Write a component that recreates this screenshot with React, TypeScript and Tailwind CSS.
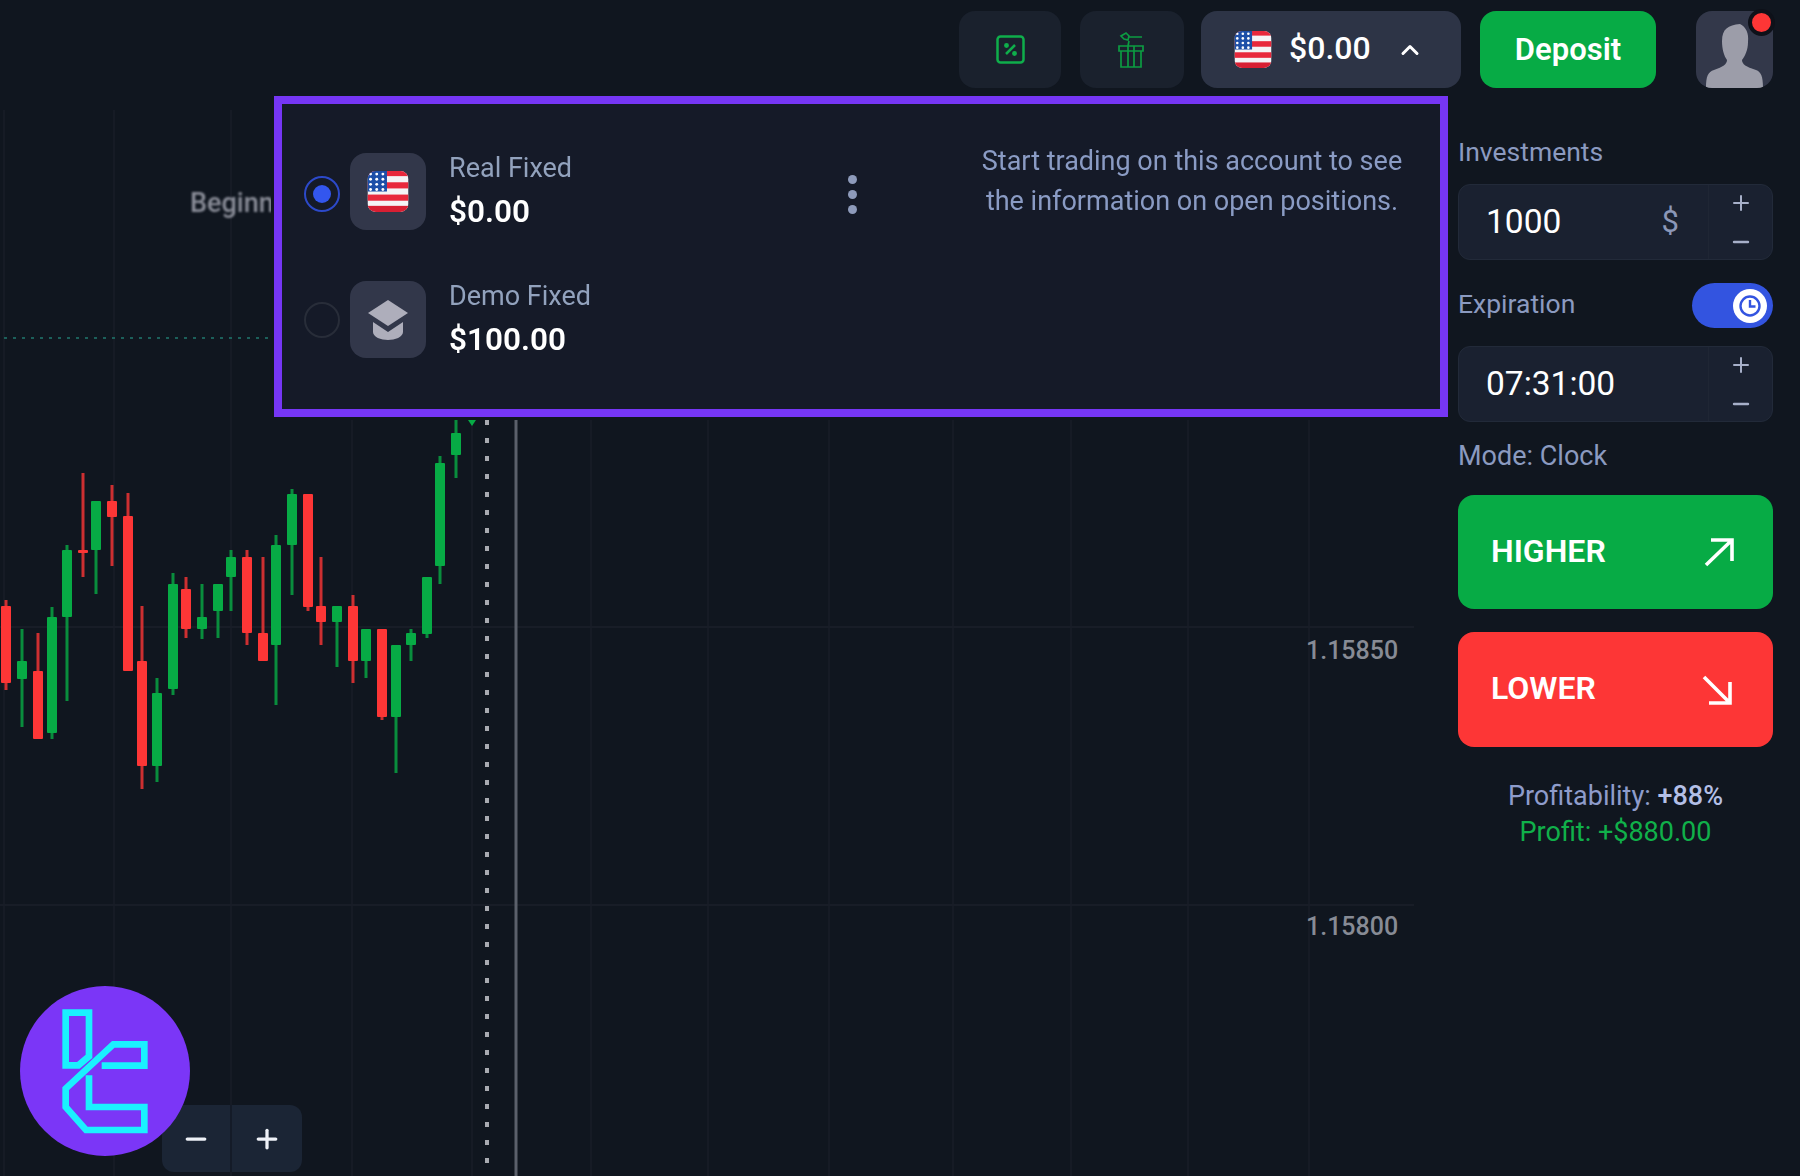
import { ChevronUp, Minus, Plus } from 'lucide-react'

type Candle = [number, number, number, number, number, 'r' | 'g']

// x, wick top, wick bottom, body top, body bottom
const candles: Candle[] = [
  [6, 600, 690, 606, 683, 'r'],
  [22, 629, 727, 661, 679, 'g'],
  [38, 633, 739, 671, 739, 'r'],
  [52, 607, 739, 617, 733, 'g'],
  [67, 545, 701, 550, 617, 'g'],
  [83, 473, 577, 550, 553, 'r'],
  [96, 501, 594, 501, 550, 'g'],
  [112, 485, 566, 501, 517, 'r'],
  [128, 493, 671, 516, 671, 'r'],
  [142, 606, 789, 661, 766, 'r'],
  [157, 678, 782, 693, 766, 'g'],
  [173, 573, 695, 584, 689, 'g'],
  [186, 577, 638, 589, 629, 'r'],
  [202, 584, 639, 617, 629, 'g'],
  [218, 584, 638, 584, 611, 'g'],
  [231, 550, 611, 557, 577, 'g'],
  [247, 550, 645, 557, 633, 'r'],
  [263, 557, 661, 633, 661, 'r'],
  [276, 535, 705, 545, 645, 'g'],
  [292, 489, 595, 494, 545, 'g'],
  [308, 494, 611, 494, 607, 'r'],
  [321, 557, 645, 606, 622, 'r'],
  [337, 606, 667, 606, 622, 'g'],
  [353, 595, 683, 606, 661, 'r'],
  [366, 629, 678, 629, 661, 'g'],
  [382, 629, 720, 629, 717, 'r'],
  [396, 645, 773, 645, 717, 'g'],
  [411, 629, 661, 633, 645, 'g'],
  [427, 577, 638, 577, 634, 'g'],
  [440, 456, 584, 463, 566, 'g'],
  [456, 420, 478, 433, 455, 'g'],
]

const gridX = [4, 114, 231, 352, 472, 591, 708, 829, 953, 1071, 1188, 1309]

function Flag({ className }: { className: string }) {
  return (
    <svg viewBox="0 0 40 40" className={className}>
      <defs>
        <clipPath id="flag-clip">
          <rect width="40" height="40" rx="8" />
        </clipPath>
      </defs>
      <g clipPath="url(#flag-clip)">
        <rect width="40" height="40" fill="#f4f4f6" />
        <rect y="0" width="40" height="5" fill="#e8283c" />
        <rect y="11" width="40" height="6" fill="#e8283c" />
        <rect y="23" width="40" height="6" fill="#e8283c" />
        <rect y="34" width="40" height="6" fill="#d81f33" />
        <rect width="19" height="20" fill="#1d4fa8" />
        {[3, 8, 13, 18].map(y =>
          [3, 9, 15].map(x => <circle key={`${x}-${y}`} cx={x} cy={y} r="1.4" fill="#fff" />)
        )}
      </g>
    </svg>
  )
}

function ChartArea() {
  return (
    <svg viewBox="0 96 1458 1080" className="block w-[1458px] h-[1080px]">
      {gridX.map(x => (
        <line key={x} x1={x} x2={x} y1="110" y2="1176" stroke="#161b25" strokeWidth="2" />
      ))}
      <line x1="0" x2="1414" y1="627" y2="627" stroke="#181d27" strokeWidth="2" />
      <line x1="0" x2="1414" y1="905" y2="905" stroke="#181d27" strokeWidth="2" />
      <line x1="4" x2="274" y1="338" y2="338" stroke="#1c5f5a" strokeWidth="2" strokeDasharray="3 6" />
      <line x1="487" x2="487" y1="420" y2="1176" stroke="#a9abb1" strokeWidth="4" strokeDasharray="5 13" />
      <line x1="516" x2="516" y1="420" y2="1176" stroke="#5b606b" strokeWidth="3" />
      <path d="M468 420 h8 l-4 6 z" fill="#07ab45" />
      <g className="blur-[0.5px]">
        {candles.map(([x, wt, wb, bt, bb, c]) => (
          <g key={x} fill={c === 'r' ? '#fd3636' : '#07ab45'}>
            <rect x={x - 1.5} y={wt} width="3" height={wb - wt} opacity="0.8" />
            <rect x={x - 5} y={bt} width="10" height={bb - bt} rx="1" />
          </g>
        ))}
      </g>
    </svg>
  )
}

function Logo() {
  return (
    <svg viewBox="60 77 510 510" className="absolute left-[20px] top-[986px] w-[170px] h-[170px]">
      <circle cx="315" cy="332" r="255" fill="#7b36f7" />
      <g fill="none" stroke="#1af1ff" strokeWidth="20">
        <path d="M197 157 H267 V288 L235 315 H197 Z" />
        <path d="M267 345 V440 H433 V509 H258 L197 440 V385 L340 252 H433 V316 H305" />
      </g>
    </svg>
  )
}

function Stepper({ value, unit }: { value: string; unit?: string }) {
  return (
    <div className="flex h-[76px] rounded-[12px] bg-[#1a2130] border border-[#222a39] text-white">
      <div className="flex-1 flex items-center justify-between pl-[27px] pr-[29px] text-[33.5px]">
        <span>{value}</span>
        {unit && <span className="text-[#8b97b8] text-[31px]">{unit}</span>}
      </div>
      <div className="w-[64px] flex flex-col items-center justify-center gap-[15px] text-[#a7b0c9] border-l border-[#1f2634]">
        <Plus className="w-[24px] h-[24px]" strokeWidth={2} />
        <Minus className="w-[24px] h-[24px]" strokeWidth={2.4} />
      </div>
    </div>
  )
}

function Account({
  icon,
  name,
  balance,
  active,
}: {
  icon: React.ReactNode
  name: string
  balance: string
  active?: boolean
}) {
  return (
    <div className="flex items-center h-[77px]">
      <div
        className={`w-[36px] h-[36px] rounded-full border-2 flex items-center justify-center ${
          active ? 'mt-[4px] border-[#2c49c9]' : 'border-[#282d39]'
        }`}
      >
        {active && <div className="w-[18px] h-[18px] rounded-full bg-[#3356ee]" />}
      </div>
      <div className="w-[76px] h-[77px] ml-[10px] rounded-[16px] bg-[#32374a] flex items-center justify-center">
        {icon}
      </div>
      <div className="ml-[23px]">
        <p className="text-[27px] leading-[38px] -mt-[2px] text-[#92a2bd]">{name}</p>
        <p className="text-[31.5px] leading-[42px] mt-[4px] font-semibold text-white">{balance}</p>
      </div>
    </div>
  )
}

export default function App() {
  return (
    <div className="relative w-[1800px] h-[1176px] overflow-hidden bg-[#10161f] font-['Roboto',sans-serif]">
      <header className="flex justify-end h-[96px] pt-[11px] pr-[27px]">
        <button className="w-[102px] h-[77px] rounded-[16px] bg-[#1a212d] flex items-center justify-center">
          <svg viewBox="0 0 29 29" className="w-[29px] h-[29px]" fill="none" stroke="#0fae4b" strokeWidth="2.5">
            <rect x="1.5" y="1.5" width="26" height="26" rx="3" />
            <path d="M10 19 L19 10" />
            <circle cx="10.5" cy="10.5" r="1.2" />
            <circle cx="18.5" cy="18.5" r="1.2" />
          </svg>
        </button>
        <button className="w-[104px] h-[77px] ml-[19px] rounded-[16px] bg-[#1a212d] flex items-center justify-center">
          <svg viewBox="0 0 28 37" className="w-[28px] h-[37px] -ml-[2px]" fill="none" stroke="#0c9c42" strokeWidth="1.7">
            <path d="M2 15 H26 V20 H2 Z M4 20 V36 H24 V20 M11 15 V36 M17 15 V36" />
            <path d="M9 2 L12 5 L11 9 L7 8 L4 5 Z M12 6 H25 M12 10 L11 15" />
          </svg>
        </button>
        <button className="w-[260px] h-[77px] ml-[17px] pl-[33px] rounded-[16px] bg-[#2d3446] flex items-center text-white">
          <Flag className="w-[38px] h-[37px]" />
          <span className="ml-[17px] -mt-[4px] text-[32px] font-medium">$0.00</span>
          <ChevronUp className="ml-[25px] w-[28px] h-[28px]" strokeWidth={2.6} />
        </button>
        <button className="w-[176px] h-[77px] ml-[19px] pt-[2px] rounded-[16px] bg-[#07ab45] text-white text-[31px] font-semibold">
          Deposit
        </button>
        <div className="relative w-[77px] h-[77px] ml-[40px] rounded-[16px] bg-[#33384a] overflow-visible">
          <svg viewBox="0 0 77 77" className="w-[77px] h-[77px] rounded-[16px]">
            <path
              d="M26 30 C26 18 32 14 44 13 C50 16 53 22 52 31 C52 39 49 45 46 49 C46 53 50 56 60 59 C65 61 67 65 67 77 H10 C10 65 12 61 18 59 C27 56 31 53 31 49 C28 45 26 38 26 30 Z"
              fill="#9c9da9"
            />
          </svg>
          <div className="absolute -top-[2px] right-[-2px] w-[27px] h-[27px] rounded-full bg-[#fd3636] border-[4px] border-[#0e1119]" />
        </div>
      </header>

      <main className="flex">
        <div className="relative w-[1458px] h-[1080px]">
          <ChartArea />
          <p className="absolute left-[190px] top-[87px] text-[27px] font-medium text-[#8b8e99] blur-[1px] whitespace-nowrap">Beginner</p>
          <span className="absolute left-[1306px] top-[536px] text-[25px] font-medium text-[#878b95]">1.15850</span>
          <span className="absolute left-[1306px] top-[812px] text-[25px] font-medium text-[#878b95]">1.15800</span>
        </div>

        <aside className="w-[315px] pt-[41px] flex flex-col">
          <p className="h-[30px] leading-[30px] text-[26.5px] text-[#8b9ac0]">Investments</p>
          <div className="mt-[17px]">
            <Stepper value="1000" unit="$" />
          </div>
          <div className="mt-[23px] h-[45px] flex items-center justify-between">
            <p className="text-[26.5px] -mt-[3px] text-[#8b9ac0]">Expiration</p>
            <div className="w-[81px] h-[45px] rounded-full bg-[#3354e0] flex items-center justify-end pr-[6px]">
              <div className="w-[34px] h-[34px] rounded-full bg-white flex items-center justify-center">
                <svg viewBox="0 0 24 24" className="w-[24px] h-[24px]" fill="none" stroke="#3354e0" strokeWidth="2.4">
                  <circle cx="12" cy="12" r="9.5" />
                  <path d="M12 6 V12.5 H17.5" />
                </svg>
              </div>
            </div>
          </div>
          <div className="mt-[18px]">
            <Stepper value="07:31:00" />
          </div>
          <p className="mt-[19px] h-[30px] leading-[30px] text-[27px] text-[#8b9ac0]">Mode: Clock</p>
          <button className="mt-[24px] h-[114px] rounded-[16px] bg-[#07ab45] pl-[33px] pr-[39px] flex items-center justify-between text-white">
            <span className="text-[32px] -mt-[2px] font-semibold">HIGHER</span>
            <svg viewBox="0 0 30 30" className="w-[30px] h-[30px]" fill="none" stroke="currentColor" strokeWidth="3.6">
              <path d="M2 28 L28 3 M7 3 H28 V24" />
            </svg>
          </button>
          <button className="mt-[23px] h-[115px] rounded-[16px] bg-[#fd3636] pl-[33px] pr-[41px] flex items-center justify-between text-white">
            <span className="text-[32px] -mt-[4px] font-semibold">LOWER</span>
            <svg viewBox="0 0 30 30" className="w-[30px] h-[30px]" fill="none" stroke="currentColor" strokeWidth="3.6">
              <path d="M2 2 L28 28 M7 28 H28 V7" />
            </svg>
          </button>
          <div className="mt-[31px] text-center text-[27px] leading-[36px]">
            <p className="text-[#8e9ccb]">
              Profitability: <span className="text-[#b3bfe6] font-medium">+88%</span>
            </p>
            <p className="text-[#10b04a]">Profit: +$880.00</p>
          </div>
        </aside>
      </main>

      <div className="absolute left-[274px] top-[96px] w-[1174px] h-[321px] border-[8px] border-[#7636f5] bg-[#151a28] shadow-[0_0_0_3px_#10161f] pl-[22px] pr-[28px] flex justify-between">
        <div className="relative flex-1 pt-[49px] flex flex-col gap-[51px]">
          <Account icon={<Flag className="w-[42px] h-[41px]" />} name="Real Fixed" balance="$0.00" active />
          <Account
            name="Demo Fixed"
            balance="$100.00"
            icon={
              <svg viewBox="0 0 42 42" className="w-[42px] h-[42px]" fill="#aeaebb">
                <path d="M21 1 L41 14 L21 27 L1 14 Z" />
                <path d="M6 23 L21 33 L36 23 V33 C36 38 28 41 21 41 C14 41 6 38 6 33 Z" />
              </svg>
            }
          />
          <div className="absolute left-[544px] top-[71px] flex flex-col gap-[6px]">
            <span className="w-[9px] h-[9px] rounded-full bg-[#8e9bbb]" />
            <span className="w-[9px] h-[9px] rounded-full bg-[#8e9bbb]" />
            <span className="w-[9px] h-[9px] rounded-full bg-[#8e9bbb]" />
          </div>
        </div>
        <p className="mt-[37px] w-[440px] text-center text-[27px] leading-[40px] text-[#8a9bc4]">
          Start trading on this account to see the information on open positions.
        </p>
      </div>

      <div className="absolute left-[162px] top-[1105px] flex h-[67px] w-[140px] rounded-[12px] bg-[#1b2535] text-[#eef1f7]">
        <div className="w-[70px] flex items-center justify-center border-r-2 border-[#141b28]">
          <Minus className="w-[30px] h-[30px]" strokeWidth={2.6} />
        </div>
        <div className="flex-1 flex items-center justify-center">
          <Plus className="w-[30px] h-[30px]" strokeWidth={2.6} />
        </div>
      </div>
      <Logo />
    </div>
  )
}
